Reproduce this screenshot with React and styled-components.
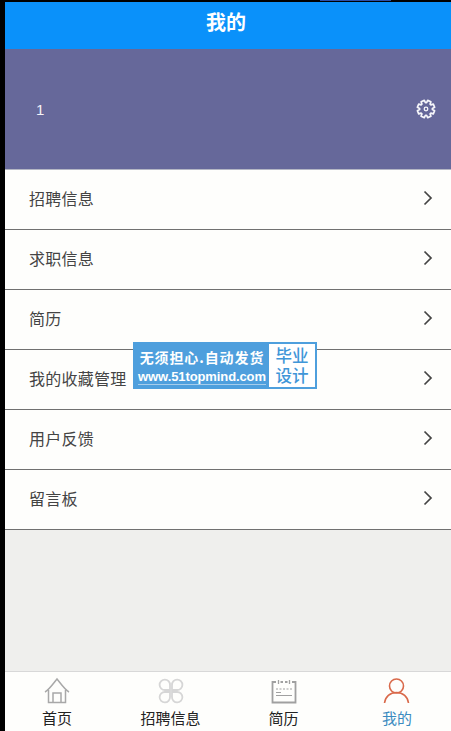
import React from "react";
import styled, { createGlobalStyle } from "styled-components";

const Global = createGlobalStyle`
  html, body { margin: 0; padding: 0; background: #000; }
  body { font-family: "Liberation Sans", "Noto Sans CJK SC", sans-serif; }
`;

const Screen = styled.div`
  position: relative;
  width: 451px;
  height: 731px;
  overflow: hidden;
`;
const LeftEdge = styled.div`
  position: absolute;
  left: 0;
  top: 0;
  width: 5px;
  height: 731px;
  background: #000;
`;
const TopEdge = styled.div`
  position: absolute;
  left: 0;
  top: 0;
  width: 451px;
  height: 2px;
  background: #000;
`;
const TopSliver = styled.div`
  position: absolute;
  left: 320px;
  top: 0;
  width: 71px;
  height: 1px;
  background: #2a4fa8;
`;
const Page = styled.div`
  display: flex;
  flex-direction: column;
  height: 731px;
  background: #efefed;
`;
const Header = styled.header`
  height: 49px;
  flex: none;
  background: #0a91fa;
  color: #fff;
  font-size: 20px;
  font-weight: 700;
  display: flex;
  align-items: center;
  justify-content: center;
  padding: 0 0 7px 1px;
  box-sizing: border-box;
`;
const Profile = styled.section`
  height: 121px;
  flex: none;
  background: #66689a;
  border-bottom: 1px solid #b4b6c4;
  color: #f4f4f8;
  display: flex;
  align-items: center;
  justify-content: space-between;
  padding: 0 15px 0 36px;
  box-sizing: border-box;
  font-size: 15px;
`;
const GearIcon = styled.svg`
  width: 20px;
  height: 20px;
  display: block;
`;
const Menu = styled.ul`
  list-style: none;
  margin: 0;
  padding: 0;
  flex: none;
`;
const Row = styled.li`
  height: 60px;
  box-sizing: border-box;
  background: #fefefc;
  border-bottom: 1px solid #707070;
  display: flex;
  align-items: center;
  justify-content: space-between;
  padding: 0 18px 3px 29px;
  color: #444;
  font-size: 16px;
  letter-spacing: 0.25px;
`;
const Spacer = styled.div`
  flex: 1;
`;
const TabBar = styled.nav`
  height: 60px;
  flex: none;
  background: #fefefc;
  border-top: 1px solid #d8d8d8;
  box-sizing: border-box;
  display: grid;
  grid-template-columns: 114px 113px 113px 111px;
`;
const Tab = styled.div`
  display: flex;
  flex-direction: column;
  align-items: center;
  padding: 5px 0 0 ${(p) => (p.$active ? "3px" : "0")};
  gap: 4px;
  font-size: 15px;
  line-height: 20px;
  color: ${(p) => (p.$active ? "#3b8bc0" : "#222")};
`;
const TabIcon = styled.svg`
  width: 28px;
  height: 28px;
  display: block;
  fill: none;
`;
const Badge = styled.div`
  position: absolute;
  left: 133px;
  top: 342px;
  width: 184px;
  height: 47px;
  background: #4e9fdd;
  display: flex;
  box-sizing: border-box;
  padding: 2px;
`;
const BadgeLeft = styled.div`
  flex: 1;
  display: flex;
  flex-direction: column;
  align-items: center;
  justify-content: center;
  color: #fff;
  font-weight: 700;
  gap: 2px;
`;
const BadgeTitle = styled.div`
  font-family: "Noto Sans CJK SC", sans-serif;
  font-size: 14px;
  line-height: 20px;
  letter-spacing: 0.9px;
  white-space: nowrap;
`;
const BadgeUrl = styled.div`
  font-family: "Liberation Sans", sans-serif;
  font-size: 13px;
  line-height: 15px;
  font-weight: 700;
  white-space: nowrap;
  letter-spacing: -0.1px;
  border-bottom: 1px solid #a5cdec;
`;
const BadgeRight = styled.div`
  width: 46px;
  background: #fff;
  color: #3f96d8;
  font-size: 16.500px;
  font-weight: 500;
  line-height: 20px;
  text-align: center;
  display: flex;
  align-items: center;
  justify-content: center;
  flex: none;
`;

const Chevron = () => (
  <svg width="10" height="16" viewBox="0 0 10 16" fill="none" stroke="#444" strokeWidth="1.7">
    <path d="M1.500 1.500 8 8l-6.500 6.500" />
  </svg>
);

const gearPoints = Array.from({ length: 8 }, (_, i) => {
  const a = (i * Math.PI) / 4 + Math.PI / 8;
  const pt = (r, d) =>
    `${(10 + r * Math.cos(a + d)).toFixed(2)},${(10 + r * Math.sin(a + d)).toFixed(2)}`;
  return [pt(6.4, -0.3), pt(8.8, -0.2), pt(8.8, 0.2), pt(6.4, 0.3)].join(" ");
}).join(" ");

const items = ["招聘信息", "求职信息", "简历", "我的收藏管理", "用户反馈", "留言板"];

export default function App() {
  return (
    <Screen>
      <Global />
      <Page>
        <Header>我的</Header>
        <Profile>
          <span>1</span>
          <GearIcon viewBox="0 0 20 20" fill="none" stroke="#f6f6fa" strokeWidth="1.700" strokeLinejoin="round">
            <polygon points={gearPoints} />
            <circle cx="10" cy="10" r="1.800" strokeWidth="1.300" />
          </GearIcon>
        </Profile>
        <Menu>
          {items.map((t) => (
            <Row key={t}>
              <span>{t}</span>
              <Chevron />
            </Row>
          ))}
        </Menu>
        <Spacer />
        <TabBar>
          <Tab>
            <TabIcon viewBox="0 0 28 28" stroke="#a8a8a8" strokeWidth="1.500">
              <path d="M2 15C6 13 10 7 14 2c4 5 8 11 12 13" />
              <path d="M5.500 13v12.500h17V13" />
              <path d="M10 25.500V16h8v9.500" />
            </TabIcon>
            首页
          </Tab>
          <Tab>
            <TabIcon viewBox="0 0 28 28" stroke="#d6d6d6" strokeWidth="1.800">
              <path d="M13 13H8A5.200 5.200 0 1 1 13 8zM15 13h5A5.200 5.200 0 1 0 15 8zM13 15H8A5.200 5.200 0 1 0 13 20zM15 15h5A5.200 5.200 0 1 1 15 20z" />
            </TabIcon>
            招聘信息
          </Tab>
          <Tab>
            <TabIcon viewBox="0 0 28 28" stroke="#a0a0a0" strokeWidth="1.800">
              <path d="M6 5H2.500v20.500h23V5H22M10.500 5h2.500M15 5h2.500" />
              <path d="M8.500 3v4M19.500 3v4" strokeWidth="1.300" />
              <path d="M6 12h16" strokeDasharray="2 1.500" strokeWidth="1.100" />
              <path d="M6 15.500h5M6 18.500h16" strokeWidth="1.100" />
            </TabIcon>
            简历
          </Tab>
          <Tab $active>
            <TabIcon viewBox="0 0 28 28" stroke="#d9694a" strokeWidth="1.600">
              <circle cx="13.500" cy="9" r="7" />
              <path d="M1.500 26c.8-6.500 5.500-10.500 12-10.500S24.700 19.500 25.500 26" />
            </TabIcon>
            我的
          </Tab>
        </TabBar>
      </Page>
      <LeftEdge />
      <TopEdge />
      <TopSliver />
      <Badge>
        <BadgeLeft>
          <BadgeTitle>无须担心.自动发货</BadgeTitle>
          <BadgeUrl>www.51topmind.com</BadgeUrl>
        </BadgeLeft>
        <BadgeRight>
          毕业
          <br />
          设计
        </BadgeRight>
      </Badge>
    </Screen>
  );
}
